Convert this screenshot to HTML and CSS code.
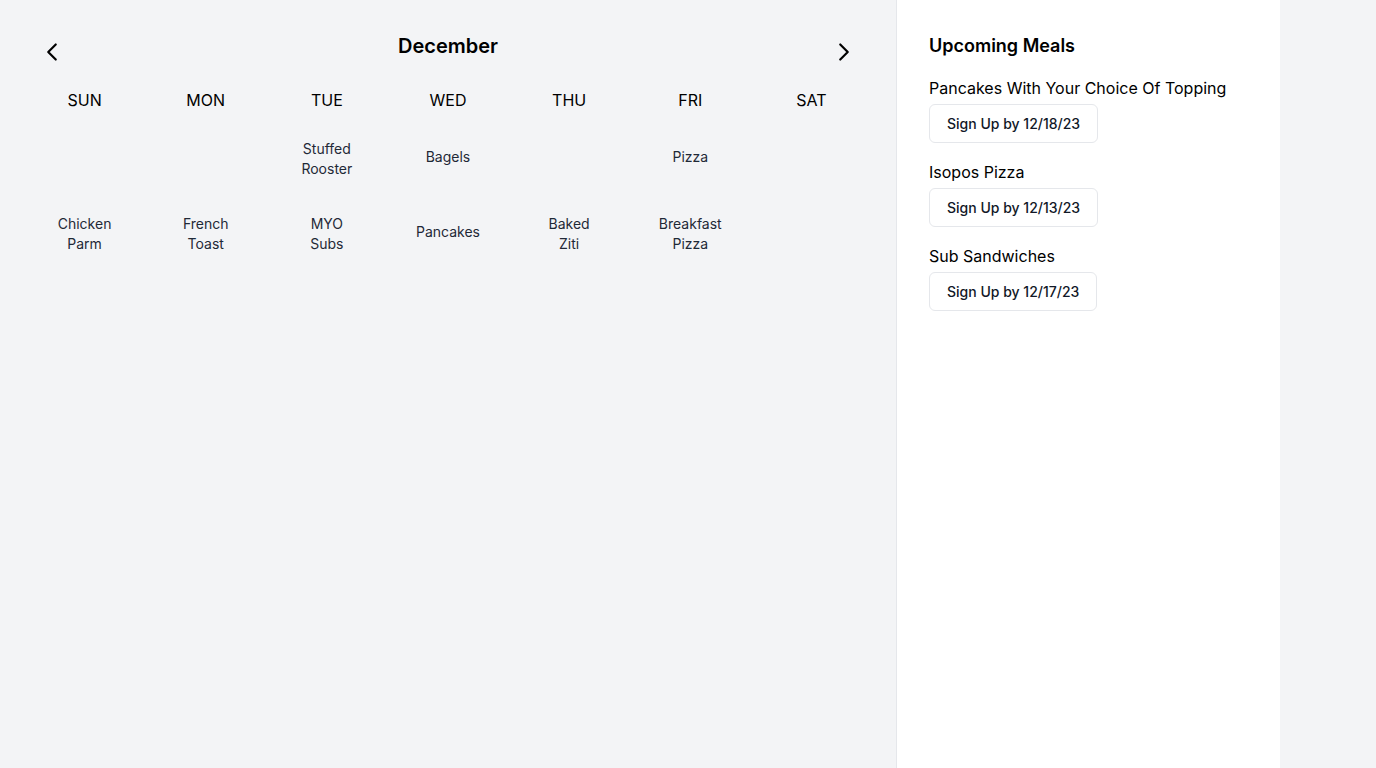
FILE: index.html
```html
<!DOCTYPE html>
<html lang="en">
<head>
<meta charset="utf-8">
<title>Meals Calendar</title>
<link rel="stylesheet" href="styles.css">
</head>
<body>
<div class="layout">
  <main class="calendar">
    <div class="cal-header">
      <button class="nav-btn" aria-label="Previous month">
        <svg viewBox="0 0 24 24" width="24" height="24" fill="none" stroke="currentColor" stroke-width="2.2" stroke-linecap="round" stroke-linejoin="round"><path d="M15.75 19.5L8.25 12l7.5-7.5"/></svg>
      </button>
      <h1 class="month">December</h1>
      <button class="nav-btn" aria-label="Next month">
        <svg viewBox="0 0 24 24" width="24" height="24" fill="none" stroke="currentColor" stroke-width="2.2" stroke-linecap="round" stroke-linejoin="round"><path d="M8.25 4.5l7.5 7.5-7.5 7.5"/></svg>
      </button>
    </div>
    <div class="weekdays">
      <div>SUN</div><div>MON</div><div>TUE</div><div>WED</div><div>THU</div><div>FRI</div><div>SAT</div>
    </div>
    <div class="days">
      <div class="day"></div>
      <div class="day"></div>
      <div class="day">Stuffed<br>Rooster</div>
      <div class="day single">Bagels</div>
      <div class="day"></div>
      <div class="day single">Pizza</div>
      <div class="day"></div>
      <div class="day">Chicken<br>Parm</div>
      <div class="day">French<br>Toast</div>
      <div class="day">MYO<br>Subs</div>
      <div class="day single">Pancakes</div>
      <div class="day">Baked<br>Ziti</div>
      <div class="day">Breakfast<br>Pizza</div>
      <div class="day"></div>
    </div>
  </main>
  <aside class="sidebar">
    <h2 class="side-title">Upcoming Meals</h2>
    <div class="meal">
      <div class="meal-name">Pancakes With Your Choice Of Topping</div>
      <button class="signup">Sign Up by 12/18/23</button>
    </div>
    <div class="meal">
      <div class="meal-name">Isopos Pizza</div>
      <button class="signup">Sign Up by 12/13/23</button>
    </div>
    <div class="meal">
      <div class="meal-name">Sub Sandwiches</div>
      <button class="signup">Sign Up by 12/17/23</button>
    </div>
  </aside>
</div>
</body>
</html>
```
FILE: styles.css
```css
* { box-sizing: border-box; }
html, body { margin: 0; padding: 0; }
body {
  background: #f3f4f6;
  font-family: Inter, "Noto Sans", sans-serif;
  color: #111827;
  height: 768px;
  overflow: hidden;
}
.layout {
  display: flex;
  height: 768px;
}
.calendar {
  flex: 0 0 896px;
  padding: 32px 24px;
}
.cal-header {
  display: flex;
  justify-content: space-between;
  align-items: flex-start;
  padding: 0 16px;
}
.nav-btn {
  margin-top: 8px;
  width: 24px;
  height: 24px;
  padding: 0;
  border: 0;
  background: none;
  color: #000000;
  display: flex;
}
.month {
  margin: 0;
  font-size: 20px;
  line-height: 28px;
  font-weight: 600;
  color: #000000;
}
.weekdays {
  margin-top: 24px;
  display: grid;
  grid-template-columns: repeat(7, 1fr);
  text-align: center;
  font-size: 16px;
  line-height: 24px;
  font-weight: 400;
  color: #000000;
}
.days {
  margin-top: 9px;
  display: grid;
  grid-template-columns: repeat(7, 1fr);
  grid-auto-rows: 75px;
}
.day {
  display: flex;
  align-items: center;
  justify-content: center;
  text-align: center;
  font-size: 14px;
  line-height: 20px;
  color: #1f2937;
}
.day.single {
  padding-bottom: 3px;
}
.sidebar {
  flex: 0 0 384px;
  background: #ffffff;
  border-left: 1px solid #e5e7eb;
  padding: 32px;
}
.side-title {
  margin: 0 0 16px;
  font-size: 18px;
  line-height: 28px;
  font-weight: 600;
  color: #000000;
}
.meal {
  margin-bottom: 17px;
}
.meal-name {
  font-size: 16px;
  line-height: 24px;
  font-weight: 400;
  color: #000000;
}
.signup {
  margin-top: 4px;
  display: inline-block;
  background: #ffffff;
  border: 1px solid #e5e7eb;
  border-radius: 6px;
  padding: 8px 17px;
  font-family: inherit;
  font-size: 14px;
  line-height: 21px;
  font-weight: 500;
  color: #111827;
}
```
